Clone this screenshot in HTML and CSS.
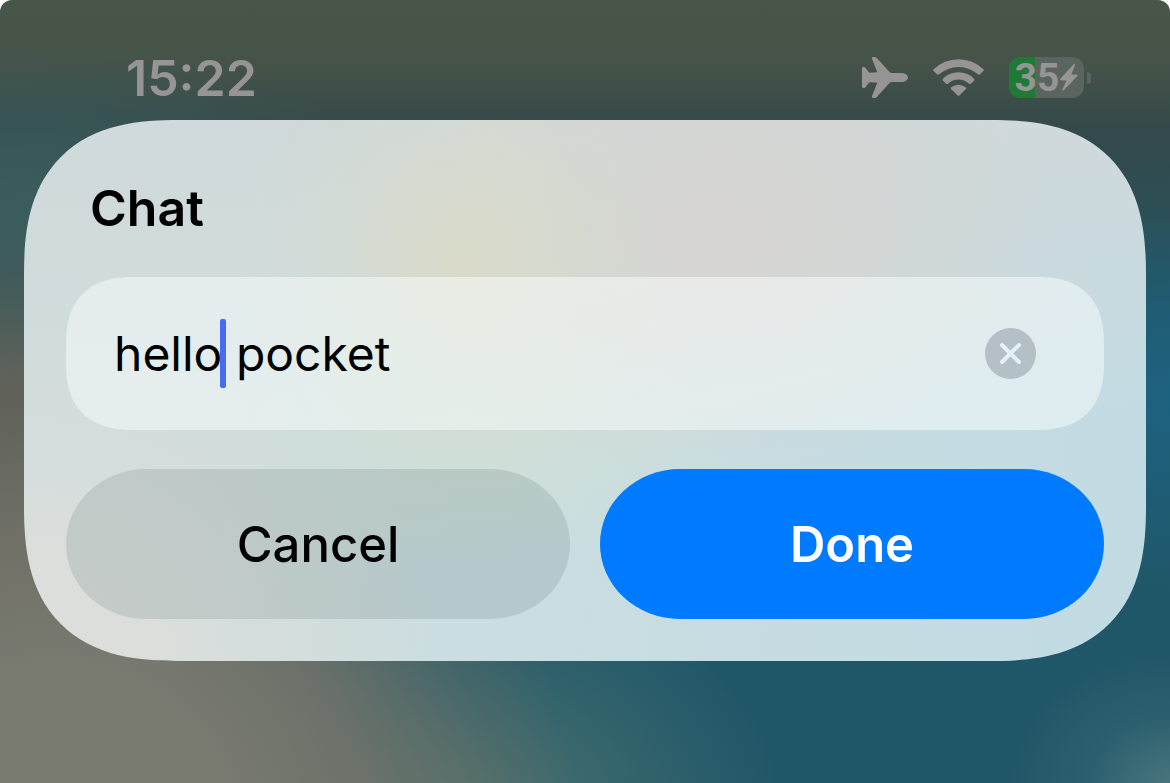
FILE: index.html
```html
<!DOCTYPE html>
<html lang="en">
<head>
    <meta charset="UTF-8">
    <meta name="viewport" content="width=device-width, initial-scale=1.0">
    <title>Chat</title>
    <link rel="stylesheet" href="styles.css">
</head>
<body>
    <div class="screen">

        <!-- status bar -->
        <header class="status-bar">
            <time class="clock">15:22</time>

            <div class="status-icons">
                <svg class="plane" viewBox="0 0 138 123" aria-hidden="true">
                    <path d="M0 34Q0 30 4 30H7Q9 30 11 33L20 45Q21 47 24 47L46 46L30 6Q29 0 33 0H38Q42 0 45 4L82 44Q85 48 90 48H118C130 48 138 55 138 61.5C138 68 130 75 118 75H90Q85 75 82 79L45 119Q42 123 38 123H33Q29 123 30 117L46 77L24 76Q21 76 20 78L11 90Q9 93 7 93H4Q0 93 0 89Z"/>
                </svg>
                <svg class="wifi" viewBox="0 0 153 111" aria-hidden="true">
                    <path d="M2 31A106 106 0 0 1 151 31Q154 33 151 36L141 46Q138 48 135 46A89 89 0 0 0 18 46Q15 48 12 46L2 36Q-1 33 2 31Z"/>
                    <path d="M30 59A65 65 0 0 1 123 59Q126 62 123 65L114 74Q111 76 108 74A45 45 0 0 0 45 74Q42 76 39 74L30 65Q27 62 30 59Z"/>
                    <path d="M55 85A33 33 0 0 1 98 85Q101 88 98 91L80 109Q77 112 73 109L55 91Q52 88 55 85Z"/>
                </svg>
                <div class="battery">
                    <div class="battery-body">
                        <span class="battery-level" style="width: 35%"></span>
                        <span class="battery-text">35</span>
                        <svg class="bolt" viewBox="0 0 54 82" aria-hidden="true">
                            <path d="M41 1Q46-2 45 4L34 32H50Q55 33 52 37L11 80Q5 84 7 77L19 50H3Q-1 49 1 45Z"/>
                        </svg>
                    </div>
                    <span class="battery-tip"></span>
                </div>
            </div>
        </header>

        <!-- input dialog -->
        <form class="dialog" onsubmit="return false">
            <label class="title" for="chat">Chat</label>

            <div class="field">
                <input class="text" id="chat" type="text" value="hello pocket" autocomplete="off" spellcheck="false">
                <span class="caret"></span>
                <button class="clear" type="button" aria-label="Clear text" onclick="clearText()">
                    <svg viewBox="0 0 51 51" aria-hidden="true">
                        <path d="M17 17L34 34M34 17L17 34"/>
                    </svg>
                </button>
            </div>

            <div class="actions">
                <button class="action cancel" type="button">Cancel</button>
                <button class="action done" type="submit">Done</button>
            </div>
        </form>
    </div>

    <script>
        function clearText(){
            document.querySelector('.text').value = '';
        }
    </script>
</body>
</html>
```
FILE: styles.css
```css
*{
    box-sizing: border-box;
    margin: 0;
    padding: 0;
}

body{
    background-color: white;
    font-family: Inter, "Liberation Sans", sans-serif;
    font-size: 50px;
    color: black;
}

button, input{
    border: none;
    background: none;
    outline: none;
    font: inherit;
    color: inherit;
}

/* blurred wallpaper */
.screen{
    min-height: 100vh;
    border-radius: 12px 12px 0 0;
    background:
        radial-gradient(ellipse 400px 170px at 0 210px, #3a5c5d, rgba(58, 92, 93, 0.6) 50%, transparent),
        radial-gradient(ellipse 300px 190px at 100% 400px, #1e6281, transparent),
        radial-gradient(ellipse 160px 130px at 100% 100%, #48757d, rgba(72, 117, 125, 0.3) 50%, transparent),
        radial-gradient(ellipse 520px 520px at 60px 850px, #797a70 35%, rgba(115, 115, 105, 0.85) 60%, rgba(105, 108, 98, 0.3) 85%, transparent),
        radial-gradient(ellipse 320px 240px at 460px 810px, #4f7370, rgba(74, 114, 113, 0.5) 50%, transparent),
        linear-gradient(#48564a, #465348 60px, #34494a 130px, transparent 340px),
        radial-gradient(ellipse 420px 520px at 0 420px, #5e6059 40%, transparent),
        #205768;
}

/* status bar */
.status-bar{
    height: 120px;
    padding: 36px 79px 0 126px;
    display: flex;
    justify-content: space-between;
    color: #969495;
}

.clock{
    line-height: 84px;
    font-weight: 600;
}

.status-icons{
    display: flex;
    align-items: center;
    height: 83px;
    gap: 25px;
    fill: #969495;
}

.plane{
    width: 46px;
    height: 41px;
}

.wifi{
    width: 51px;
    height: 37px;
}

.battery{
    display: flex;
    align-items: center;
    gap: 3px;
}

.battery-body{
    position: relative;
    width: 75px;
    height: 41px;
    border-radius: 12px;
    background-color: #5b655f;
    display: flex;
    align-items: center;
    justify-content: center;
    gap: 1px;
}

.battery-level{
    position: absolute;
    left: 0;
    top: 0;
    height: 100%;
    border-radius: 12px 0 0 12px;
    background-color: #1f7a35;
}

.battery-text{
    position: relative;
    font-family: Roboto, "Liberation Sans", sans-serif;
    font-size: 39px;
    font-weight: 700;
    line-height: 44px;
}

.bolt{
    width: 18px;
    height: 27px;
}

.battery-tip{
    width: 4px;
    height: 12px;
    border-radius: 0 4px 4px 0;
    background-color: #5b655f;
}

/* dialog */
.dialog{
    margin: 0 24px;
    padding: 58px 42px 42px;
    border-radius: 124px;
    background:
        radial-gradient(ellipse 220px 230px at 440px 140px, #d9dac8, rgba(216, 219, 203, 0.5) 50%, transparent),
        radial-gradient(ellipse 340px 240px at 690px 120px, #d8d5d1, rgba(215, 213, 209, 0.6) 50%, transparent),
        radial-gradient(ellipse 420px 360px at 0 100%, #e0dfdb, rgba(222, 222, 219, 0.5) 50%, transparent),
        radial-gradient(ellipse 300px 130px at 440px 320px, #cfdfd8, transparent),
        linear-gradient(#d0d9db, rgba(208, 218, 220, 0) 300px),
        linear-gradient(100deg, #cfdddd 20%, #c8dde2 60%, #c1dbe3);
}

.title{
    display: block;
    padding-left: 24px;
    margin-bottom: 39px;
    line-height: 60px;
    font-weight: 600;
}

.field{
    position: relative;
    display: flex;
    align-items: center;
    height: 153px;
    margin-bottom: 39px;
    padding: 0 68px 0 48px;
    border-radius: 56px;
    background-color: rgba(250, 255, 255, 0.48);
}

.text{
    flex: 1;
    min-width: 0;
    height: 70px;
    font-size: 48px;
}

/* drawn over the text, after the first word */
.caret{
    position: absolute;
    left: 154px;
    top: 42px;
    width: 6px;
    height: 69px;
    border-radius: 2px;
    background-color: #466bf2;
}

.clear{
    width: 51px;
    height: 51px;
    border-radius: 50%;
    background-color: #b4c0c5;
}

.clear svg{
    display: block;
    stroke: #e4f1f7;
    stroke-width: 4;
    stroke-linecap: round;
}

.actions{
    display: grid;
    grid-template-columns: 1fr 1fr;
    gap: 30px;
}

.action{
    height: 150px;
    border-radius: 80px / 75px;
    font-size: 49px;
    font-weight: 500;
}

.cancel{
    background-color: rgba(0, 30, 30, 0.1);
}

.done{
    background-color: #007aff;
    color: white;
    font-weight: 600;
}

/* continuous corners where the browser can draw them */
@supports (corner-shape: squircle) {
    .dialog{
        border-radius: 155px;
        corner-shape: superellipse(1.35);
    }
    .field{
        border-radius: 68px;
        corner-shape: superellipse(1.3);
    }
}
```
